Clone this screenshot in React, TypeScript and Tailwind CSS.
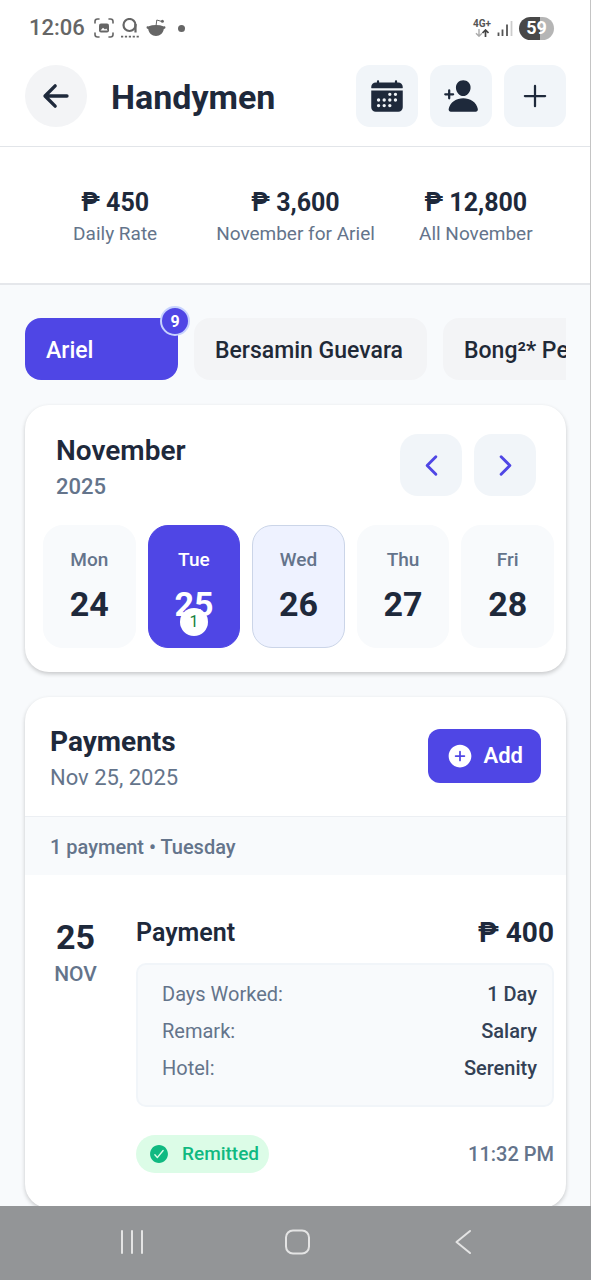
import React, { useState } from 'react';
import {
  IoAdd,
  IoAddCircle,
  IoArrowBack,
  IoCalendar,
  IoCheckmarkCircle,
  IoChevronBack,
  IoChevronForward,
  IoPersonAdd,
} from 'react-icons/io5';

const stats = [
  { value: '₱ 450', label: 'Daily Rate' },
  { value: '₱ 3,600', label: 'November for Ariel' },
  { value: '₱ 12,800', label: 'All November' },
];

const workers = [
  { name: 'Ariel', count: 9 },
  { name: 'Bersamin Guevara', count: 0 },
  { name: 'Bong²* Perez', count: 0 },
];

const days = [
  { name: 'Mon', date: 24, payments: 0 },
  { name: 'Tue', date: 25, payments: 1 },
  { name: 'Wed', date: 26, payments: 0 },
  { name: 'Thu', date: 27, payments: 0 },
  { name: 'Fri', date: 28, payments: 0 },
];

const today = 26;

const details = [
  { label: 'Days Worked:', value: '1 Day' },
  { label: 'Remark:', value: 'Salary' },
  { label: 'Hotel:', value: 'Serenity' },
];

function StatusBar() {
  return (
    <div className="flex h-14 items-center justify-between pl-[29px] pr-9 text-[#666666]">
      <div className="flex items-center">
        <span className="text-[22px] leading-7 font-medium">12:06</span>
        {/* Screenshot */}
        <svg className="ml-[9px] h-5 w-5" viewBox="0 0 20 20" fill="none" stroke="currentColor" strokeWidth="1.6" strokeLinecap="round">
          <path d="M1 5V3.500Q1 1 3.500 1H5M15 1h1.500Q19 1 19 3.500V5M19 15v1.500Q19 19 16.500 19H15M5 19H3.500Q1 19 1 16.500V15" />
          <rect x="5" y="5.500" width="10" height="9" rx="2" fill="currentColor" stroke="none" />
          <path d="M6.500 12.500 9 9.800l2 1.700 1.200-1 1.500 2z" fill="#fff" stroke="none" />
        </svg>
        {/* App notification */}
        <svg className="ml-[7px] h-5 w-[18px]" viewBox="0 0 18 20" fill="none" stroke="currentColor" strokeWidth="2.200">
          <circle cx="8.500" cy="7" r="6" />
          <path d="M14.500 6v8.500" />
          <path d="M0 18.700h18" strokeWidth="1.800" strokeDasharray="2.200 1.700" />
        </svg>
        {/* Reddit */}
        <svg className="ml-[7px] h-5 w-5" viewBox="0 0 20 20" fill="currentColor">
          <path d="M2 8.400Q10 5.800 18 8.400c1.700-.4 2.200 2-.2 2.700C17.200 15.200 14.200 18 10 18S2.800 15.200 2.200 11.100C-.2 10.400.3 8 2 8.400z" />
          <path d="M10 8l.8-6 4.800 1.400" fill="none" stroke="currentColor" strokeWidth="1" />
          <circle cx="16.400" cy="3.200" r="1.500" />
        </svg>
        <span className="ml-3 h-[7px] w-[7px] rounded-full bg-[#666666]" />
      </div>
      <div className="flex items-center">
        <div className="flex flex-col items-center">
          <span className="text-[10px] leading-[10px] font-bold text-[#555555]">4G+</span>
          <svg className="h-2 w-3.5" viewBox="0 0 14 8" fill="none" strokeWidth="1.400">
            <path d="M4 0v7M1 4.200 4 7.200 7 4.200" stroke="#aaaaaa" />
            <path d="M10.500 8V1M7.500 4l3-3 3 3" stroke="#444444" strokeWidth="1.700" />
          </svg>
        </div>
        <svg className="ml-1.5 h-4 w-4" viewBox="0 0 16 16">
          <path d="M1.500 12.500V16M5.500 9.500V16M10 4.500V16" stroke="#555555" strokeWidth="1.800" />
          <path d="M14.500 1V16" stroke="#cccccc" strokeWidth="1.800" />
        </svg>
        <span className="ml-1.5 flex h-[23px] w-[35px] items-center justify-center rounded-full bg-linear-to-r from-[#484848] from-59% to-[#b5b5b5] to-59% text-[18px] leading-none font-bold text-white">
          59
        </span>
      </div>
    </div>
  );
}

export default function HandymenScreen() {
  const [selectedWorker, setSelectedWorker] = useState('Ariel');
  const [selectedDay, setSelectedDay] = useState(25);

  return (
    <div className="flex h-screen flex-col bg-[#f8fafc] font-[Roboto,sans-serif] text-[#1e293b]">
      <div className="flex min-h-0 flex-1 flex-col border-r border-[#c4c4c4]">
        {/* Header */}
        <header className="border-b border-[#e2e5e9] bg-white">
          <StatusBar />
          <div className="flex items-center pt-[9px] pr-6 pb-[19px] pl-[25px]">
            <button
              aria-label="Back"
              className="flex h-[62px] w-[62px] shrink-0 items-center justify-center rounded-full bg-[#f3f4f6]"
            >
              <IoArrowBack className="h-9 w-9" />
            </button>
            <h1 className="ml-6 flex-1 pt-0.5 text-[34px] leading-10 font-bold">Handymen</h1>
            <div className="flex gap-3">
              <button
                aria-label="Calendar"
                className="flex h-[62px] w-[62px] items-center justify-center rounded-[14px] bg-[#f1f5f9]"
              >
                <IoCalendar className="h-9 w-9" />
              </button>
              <button
                aria-label="Add handyman"
                className="flex h-[62px] w-[62px] items-center justify-center rounded-[14px] bg-[#f1f5f9]"
              >
                <IoPersonAdd className="h-9 w-9" />
              </button>
              <button
                aria-label="Add"
                className="flex h-[62px] w-[62px] items-center justify-center rounded-[14px] bg-[#f1f5f9]"
              >
                <IoAdd className="h-9 w-9" />
              </button>
            </div>
          </div>
        </header>

        {/* Stats */}
        <section className="flex border-b-2 border-[#e5e7eb] bg-white pt-10 pr-6 pb-[37px] pl-[25px]">
          {stats.map((stat) => (
            <div key={stat.label} className="flex-1 text-center">
              <p className="text-[25px] leading-8 font-bold">{stat.value}</p>
              <p className="mt-[3px] text-[19px] leading-6 text-[#64748b]">{stat.label}</p>
            </div>
          ))}
        </section>

        <main className="min-h-0 flex-1 overflow-y-auto pr-6 pl-[25px] [scrollbar-width:none]">
          {/* Workers */}
          <div className="flex gap-4 overflow-x-auto pt-[33px] pb-[25px] [scrollbar-width:none]">
            {workers.map((worker) => (
              <button
                key={worker.name}
                onClick={() => setSelectedWorker(worker.name)}
                className={`relative flex h-[62px] min-w-[153px] shrink-0 items-center rounded-2xl pt-1 pr-6 pl-[21px] text-[23px] leading-7 font-medium ${
                  selectedWorker === worker.name
                    ? 'bg-[#4f46e5] text-white'
                    : 'bg-[#f3f4f6] text-[#1f2937]'
                }`}
              >
                {worker.name}
                {worker.count > 0 && (
                  <span className="absolute -top-3 -right-3 flex h-[30px] w-[30px] items-center justify-center rounded-full border-2 border-[#c7d2fe] bg-[#4f46e5] pt-0.5 text-base leading-none font-bold text-white">
                    {worker.count}
                  </span>
                )}
              </button>
            ))}
          </div>

          {/* Calendar */}
          <section className="rounded-3xl bg-white pt-[29px] pr-3 pb-6 pl-[18px] shadow-[0_2px_4px_rgba(0,0,0,0.2)]">
            <div className="flex items-start justify-between pr-[18px] pl-[13px]">
              <div className="pt-px">
                <h2 className="text-[28px] leading-8 font-semibold">November</h2>
                <p className="mt-1.5 text-[22px] leading-7 font-medium text-[#64748b]">2025</p>
              </div>
              <div className="flex gap-3">
                <button
                  aria-label="Previous"
                  className="flex h-[62px] w-[62px] items-center justify-center rounded-[18px] bg-[#f1f5f9] text-[#4f46e5]"
                >
                  <IoChevronBack className="h-[31px] w-[31px]" />
                </button>
                <button
                  aria-label="Next"
                  className="flex h-[62px] w-[62px] items-center justify-center rounded-[18px] bg-[#f1f5f9] text-[#4f46e5]"
                >
                  <IoChevronForward className="h-[31px] w-[31px]" />
                </button>
              </div>
            </div>
            <div className="mt-6 flex gap-3">
              {days.map((day) => (
                <button
                  key={day.date}
                  onClick={() => setSelectedDay(day.date)}
                  className={`relative flex h-[123px] flex-1 flex-col items-center rounded-[20px] border pt-[22px] ${
                    selectedDay === day.date
                      ? 'border-[#4f46e5] bg-[#4f46e5] text-white'
                      : day.date === today
                        ? 'border-[#cbd5e8] bg-[#eef2ff]'
                        : 'border-[#f8fafc] bg-[#f8fafc]'
                  }`}
                >
                  <span
                    className={`text-[19px] leading-6 font-medium ${
                      selectedDay === day.date ? 'text-white' : 'text-[#64748b]'
                    }`}
                  >
                    {day.name}
                  </span>
                  <span className="mt-3 text-[34px] leading-10 font-bold">{day.date}</span>
                  {day.payments > 0 && (
                    <span className="absolute bottom-[11px] left-1/2 flex h-7 w-7 -translate-x-1/2 items-center justify-center rounded-full bg-white text-base leading-none text-[#15803d]">
                      {day.payments}
                    </span>
                  )}
                </button>
              ))}
            </div>
          </section>

          {/* Payments */}
          <section className="mt-[25px] overflow-hidden rounded-3xl bg-white shadow-[0_2px_4px_rgba(0,0,0,0.2)]">
            <div className="flex items-start justify-between border-b border-[#eceff3] px-[25px] pt-7 pb-[26px]">
              <div className="pt-px">
                <h2 className="text-[28px] leading-8 font-bold">Payments</h2>
                <p className="mt-2 text-[22px] leading-6 text-[#64748b]">Nov 25, 2025</p>
              </div>
              <button className="mt-1 flex h-[54px] items-center gap-2.5 rounded-xl bg-[#4f46e5] px-[18px] text-[22px] leading-7 font-semibold text-white">
                <IoAddCircle className="h-7 w-7" />
                Add
              </button>
            </div>
            <p className="bg-[#f8fafc] px-[25px] pt-[17px] pb-3.5 text-[20px] leading-[27px] font-medium text-[#64748b]">
              1 payment • Tuesday
            </p>

            <article className="flex pt-[43px] pr-3 pb-[35px] pl-[25px]">
              <div className="w-[51px] text-center">
                <p className="text-[34px] leading-[38px] font-bold">25</p>
                <p className="mt-1.5 text-[21px] leading-6 font-medium text-[#64748b]">NOV</p>
              </div>
              <div className="ml-[35px] flex-1">
                <div className="flex items-center justify-between pt-px">
                  <h3 className="text-[25px] leading-7 font-semibold">Payment</h3>
                  <p className="text-[28px] leading-7 font-bold">₱ 400</p>
                </div>
                <dl className="mt-4 flex flex-col gap-3 rounded-[10px] border-2 border-[#f1f5f9] bg-[#f8fafc] pt-[17px] pr-[15px] pb-6 pl-6">
                  {details.map((row) => (
                    <div key={row.label} className="flex justify-between text-[20px] leading-[25px]">
                      <dt className="text-[#64748b]">{row.label}</dt>
                      <dd className="font-medium text-[#334155]">{row.value}</dd>
                    </div>
                  ))}
                </dl>
                <div className="mt-7 flex items-center justify-between">
                  <span className="flex h-[38px] items-center gap-3 rounded-full bg-[#dcfce7] pr-2.5 pl-3 text-[19px] leading-6 font-medium text-[#10b981]">
                    <IoCheckmarkCircle className="h-[22px] w-[22px]" />
                    Remitted
                  </span>
                  <time className="text-[20px] leading-6 font-medium text-[#64748b]">11:32 PM</time>
                </div>
              </div>
            </article>
          </section>
        </main>
      </div>

      {/* System navigation */}
      <nav className="flex h-[74px] shrink-0 items-center justify-around bg-[#939597] pr-11 pb-[3px] pl-[49px]">
        <button aria-label="Recent apps">
          <svg className="h-7 w-7" viewBox="0 0 28 28" stroke="#e4e4e4" strokeWidth="2" strokeLinecap="round">
            <path d="M4 3v22M14 3v22M24 3v22" />
          </svg>
        </button>
        <button aria-label="Home">
          <svg className="h-7 w-7" viewBox="0 0 28 28" fill="none" stroke="#e4e4e4" strokeWidth="2">
            <rect x="2" y="2.500" width="23" height="23" rx="7" />
          </svg>
        </button>
        <button aria-label="Back to previous app">
          <svg className="h-7 w-7" viewBox="0 0 28 28" fill="none" stroke="#e4e4e4" strokeWidth="2" strokeLinecap="round" strokeLinejoin="round">
            <path d="M20 3 6.500 14 20 25" />
          </svg>
        </button>
      </nav>
    </div>
  );
}
